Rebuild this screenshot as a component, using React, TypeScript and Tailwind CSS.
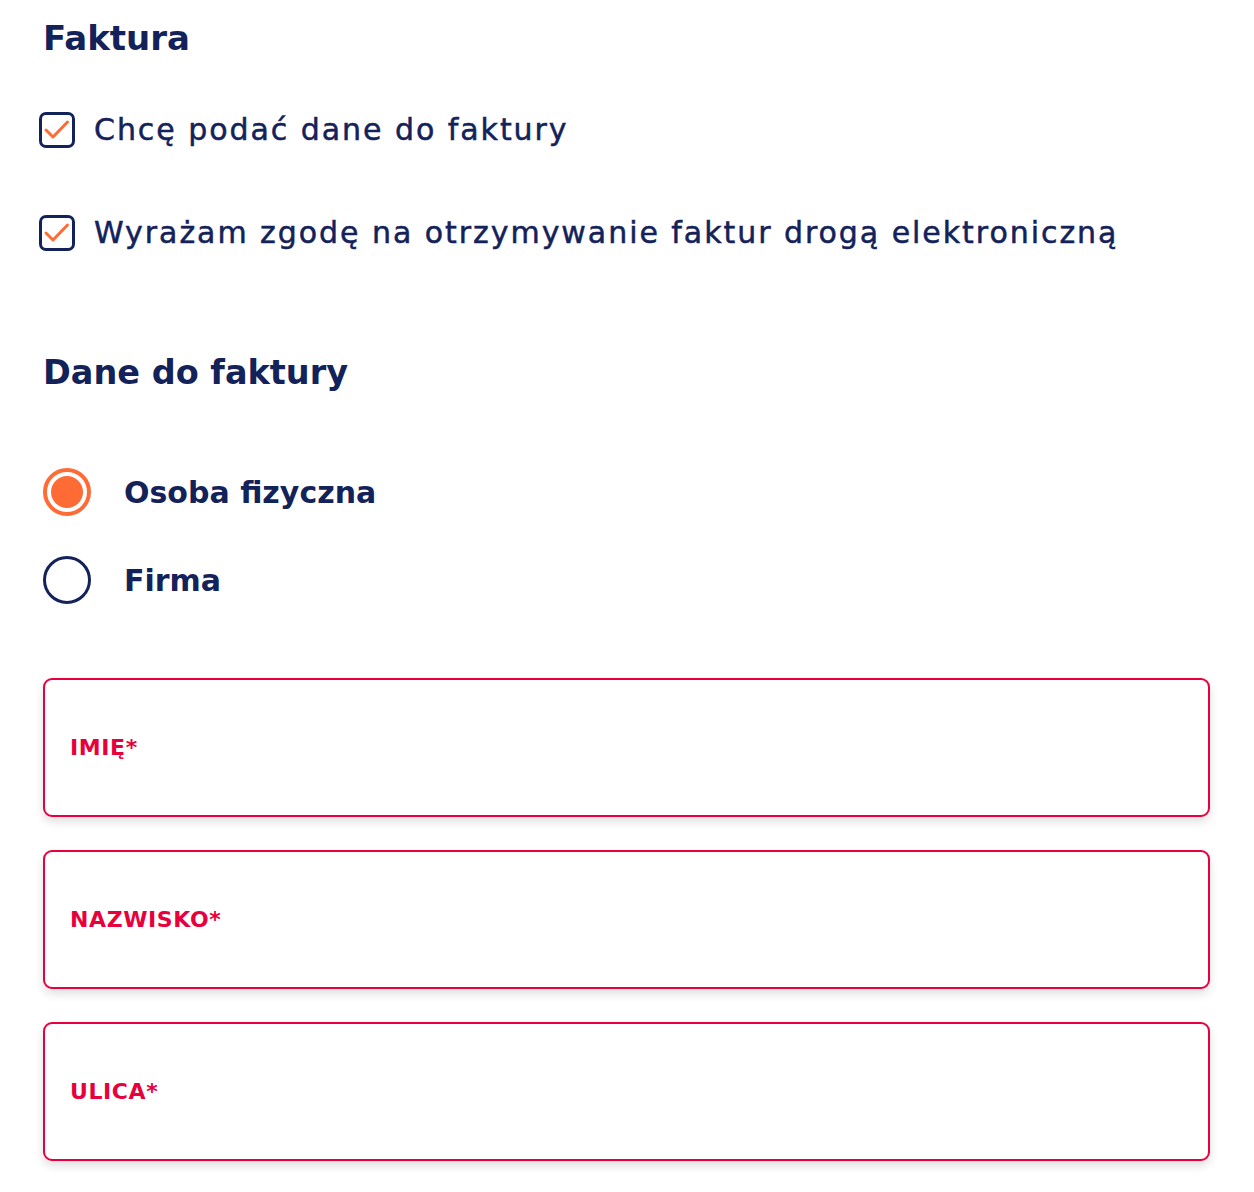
import React from "react";

const font = { fontFamily: '"DejaVu Sans", "Noto Sans", sans-serif' };

function Check({ label, className }: { label: string; className?: string }) {
  return (
    <div className={"flex items-center " + (className ?? "")}>
      <div className="w-[36px] h-[36px] rounded-[7px] border-[3px] border-[#14225a] flex items-center justify-center shrink-0">
        <svg width="30" height="30" viewBox="0 0 30 30" fill="none">
          <path d="M4 15 L11 22 L25.5 7" stroke="#ff6b35" strokeWidth="3" strokeLinecap="round" strokeLinejoin="round" />
        </svg>
      </div>
      <span className="ml-[19px] text-[30px] text-[#14225a] tracking-[1.95px] [-webkit-text-stroke:0.5px_#14225a]">{label}</span>
    </div>
  );
}

function Radio({ label, checked }: { label: string; checked?: boolean }) {
  return (
    <div className="flex items-center h-[48px]">
      {checked ? (
        <div className="w-[48px] h-[48px] rounded-full border-[4px] border-[#ff6b35] flex items-center justify-center shrink-0">
          <div className="w-[32px] h-[32px] rounded-full bg-[#ff6b35]" />
        </div>
      ) : (
        <div className="w-[48px] h-[48px] rounded-full border-[3px] border-[#14225a] shrink-0" />
      )}
      <span className="ml-[33px] text-[30px] font-bold text-[#14225a]">{label}</span>
    </div>
  );
}

function Field({ label }: { label: string }) {
  return (
    <div className="h-[139px] rounded-[9px] border-2 border-[#e8003d] bg-white shadow-[0_5px_10px_rgba(0,0,0,0.12)] flex items-center px-[25px]">
      <span className="text-[22px] font-bold text-[#e8003d] tracking-[0.6px]">{label}</span>
    </div>
  );
}

export default function App() {
  return (
    <div style={font} className="bg-white w-[1254px] h-[1192px] pl-[43px] pr-[44px] pt-[16px]">
      <h2 className="text-[34px] font-bold text-[#14225a] leading-[44px]">Faktura</h2>
      <Check label="Chcę podać dane do faktury" className="mt-[47px] ml-[-4px]" />
      <Check label="Wyrażam zgodę na otrzymywanie faktur drogą elektroniczną" className="mt-[58px] ml-[-4px]" />
      <h2 className="text-[33.5px] font-bold text-[#14225a] leading-[44px] mt-[96px]">Dane do faktury</h2>
      <div className="mt-[73px] flex flex-col gap-[40px]">
        <Radio label="Osoba fizyczna" checked />
        <Radio label="Firma" />
      </div>
      <div className="mt-[74px] flex flex-col gap-[33px]">
        <Field label="IMIĘ*" />
        <Field label="NAZWISKO*" />
        <Field label="ULICA*" />
      </div>
    </div>
  );
}
